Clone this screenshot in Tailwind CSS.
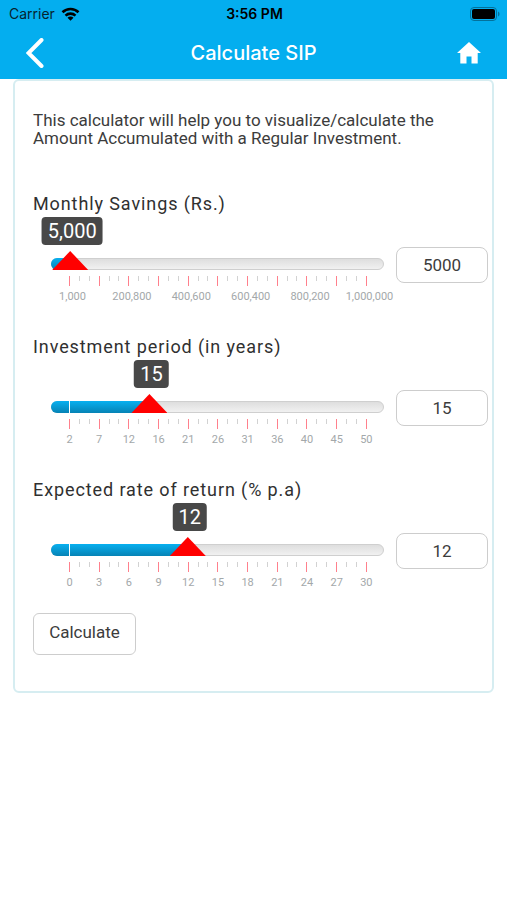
<!DOCTYPE html>
<html lang="en">
  <head>
    <meta charset="UTF-8" />
    <meta name="viewport" content="width=device-width, initial-scale=1.0" />
    <title>Calculate SIP</title>
    <script src="https://cdn.jsdelivr.net/npm/@tailwindcss/browser@4"></script>
  </head>
  <body class="bg-white font-[Roboto,sans-serif] text-[#3c3c3c]">
    <header class="bg-[#04aeef] font-[Inter,sans-serif]">
      <!-- Status bar -->
      <div class="grid grid-cols-3 items-center h-7 pl-[9px] pr-[7px] text-sm text-[#06242f]">
        <div class="flex items-center gap-[6px]">
          <span>Carrier</span>
          <svg class="w-[19px] h-[14px]" viewBox="0 0 18 14" fill="none" stroke="#000" stroke-width="2.6">
            <path d="M1 5.2a11.6 11.6 0 0 1 16 0" />
            <path d="M4 8.6a7.3 7.3 0 0 1 10 0" />
            <path d="M9 13.8 6 10.8a4.2 4.2 0 0 1 6 0z" fill="#000" stroke="none" />
          </svg>
        </div>
        <span class="text-center font-semibold text-black">3:56 PM</span>
        <svg class="w-[30px] h-[14px] justify-self-end" viewBox="0 0 30 14">
          <rect x="0.5" y="0.5" width="26" height="13" rx="3.5" fill="none" stroke="#03719b" />
          <rect x="2" y="2" width="23" height="10" rx="2" fill="#000" />
          <path d="M28 4.5c2 .8 2 4.2 0 5z" fill="#03719b" />
        </svg>
      </div>

      <!-- Title bar -->
      <div class="flex items-center justify-between h-[51px] px-[26px] pb-[2px]">
        <button type="button" aria-label="Back" class="w-6">
          <svg class="w-[18px] h-[30px]" viewBox="0 0 18 30" fill="none" stroke="#fff" stroke-width="4">
            <path d="M15.5 2 2.500 15l13 13" stroke-linecap="round" />
          </svg>
        </button>
        <h1 class="text-xl font-medium text-white">Calculate SIP</h1>
        <button type="button" aria-label="Home">
          <svg class="w-6 h-[22px]" viewBox="0 0 24 22" fill="#fff">
            <path d="M12 0 24 11h-3.300v10.500h-6.200v-7h-5v7H3.300V11H0z" />
          </svg>
        </button>
      </div>
    </header>

    <main class="mx-[13px] border-2 border-[#d6edf1] rounded-md pl-[18px] pr-1 pt-[30px] pb-9">
      <p class="text-[17px] leading-[18px]">
        This calculator will help you to visualize/calculate the Amount Accumulated with a Regular Investment.
      </p>
      <form id="sip-form" onsubmit="return false">
        <div id="sliders" class="flex flex-col gap-[35px] mt-12"></div>
        <button
          type="submit"
          class="mt-6 w-[103px] h-[42px] pb-[2px] border border-[#cdcdcd] rounded-md text-[17px] hover:bg-gray-50"
        >
          Calculate
        </button>
      </form>
    </main>

    <script>
      const fields = [
        {
          id: "savings",
          title: "Monthly Savings (Rs.)",
          min: 1000,
          max: 1000000,
          value: 5000,
          scale: ["1,000", "200,800", "400,600", "600,400", "800,200", "1,000,000"],
          scaleClass: "ml-[21px] mr-[14px]",
        },
        {
          id: "period",
          title: "Investment period (in years)",
          min: 2,
          max: 50,
          value: 15,
          scale: [2, 7, 12, 16, 21, 26, 31, 36, 40, 45, 50],
          scaleClass: "ml-[18px] mr-[17px]",
        },
        {
          id: "rate",
          title: "Expected rate of return (% p.a)",
          min: 0,
          max: 30,
          value: 12,
          scale: [0, 3, 6, 9, 12, 15, 18, 21, 24, 27, 30],
          scaleClass: "ml-[18px] mr-[17px]",
        },
      ];

      // Every third tick is a major one
      let ticks = "";
      for (let i = 0; i <= 30; i++) {
        ticks +=
          i % 3 === 0
            ? `<i class="w-px h-[10px] bg-[#ff808c]"></i>`
            : `<i class="w-px h-[5px] bg-[#d2d2d2]"></i>`;
      }

      const percent = (f, value) => ((value - f.min) / (f.max - f.min)) * 100;

      document.getElementById("sliders").innerHTML = fields
        .map(
          (f) => `
        <div>
          <label for="${f.id}" class="block text-lg leading-[18px] tracking-wider text-[#303030]">${f.title}</label>
          <div class="flex items-start gap-3 mt-1 pl-[18px]">
            <div class="flex-1">
              <div class="relative h-7 mx-[18px]">
                <output id="${f.id}-bubble" for="${f.id}" style="left: ${percent(f, f.value)}%"
                  class="absolute top-0 -translate-x-1/2 ml-[2px] px-[6px] rounded-sm bg-[#484848] text-xl leading-7 text-white">${f.value.toLocaleString("en-US")}</output>
              </div>
              <div class="relative h-[19px] mt-[6px]">
                <div class="absolute inset-x-0 bottom-0 h-3 rounded-full border border-[#cfcfcf] bg-linear-to-b from-[#dedede] to-[#f1f1f1]"></div>
                <div class="absolute left-0 bottom-0 w-[18px] h-3 rounded-l-full bg-linear-to-b from-[#08b0f0] to-[#0683b5]"></div>
                <div class="absolute inset-x-[18px] bottom-0 h-3">
                  <div id="${f.id}-fill" style="width: ${percent(f, f.value)}%"
                    class="h-3 border-l border-white bg-linear-to-b from-[#08b0f0] to-[#0683b5]"></div>
                </div>
                <input type="range" id="${f.id}" min="${f.min}" max="${f.max}" value="${f.value}"
                  class="absolute inset-0 w-full h-[19px] appearance-none bg-transparent [&::-webkit-slider-thumb]:appearance-none [&::-webkit-slider-thumb]:w-9 [&::-webkit-slider-thumb]:h-[19px] [&::-webkit-slider-thumb]:bg-[#ff0000] [&::-webkit-slider-thumb]:[clip-path:polygon(50%_0,100%_100%,0_100%)]" />
              </div>
              <div class="flex justify-between h-[10px] ml-[18px] mr-[17px] mt-[6px]">${ticks}</div>
              <div class="flex justify-between mt-[5px] text-[11px] leading-3 text-[#a3a8aa] ${f.scaleClass}">
                ${f.scale.map((n) => `<span class="flex justify-center w-px">${n}</span>`).join("")}
              </div>
            </div>
            <input type="text" inputmode="numeric" id="${f.id}-value" aria-label="${f.title}" value="${f.value}"
              class="w-[92px] h-9 mt-[30px] border border-[#cdcdcd] rounded-lg text-center text-[17px]" />
          </div>
        </div>`
        )
        .join("");

      // Keep the bubble, the filled track and the text box in step
      fields.forEach((f) => {
        const range = document.getElementById(f.id);
        const box = document.getElementById(`${f.id}-value`);
        const update = () => {
          const value = Number(range.value);
          document.getElementById(`${f.id}-bubble`).textContent = value.toLocaleString("en-US");
          document.getElementById(`${f.id}-bubble`).style.left = `${percent(f, value)}%`;
          document.getElementById(`${f.id}-fill`).style.width = `${percent(f, value)}%`;
        };
        range.addEventListener("input", () => {
          box.value = range.value;
          update();
        });
        box.addEventListener("change", () => {
          range.value = box.value;
          update();
        });
      });
    </script>
  </body>
</html>
